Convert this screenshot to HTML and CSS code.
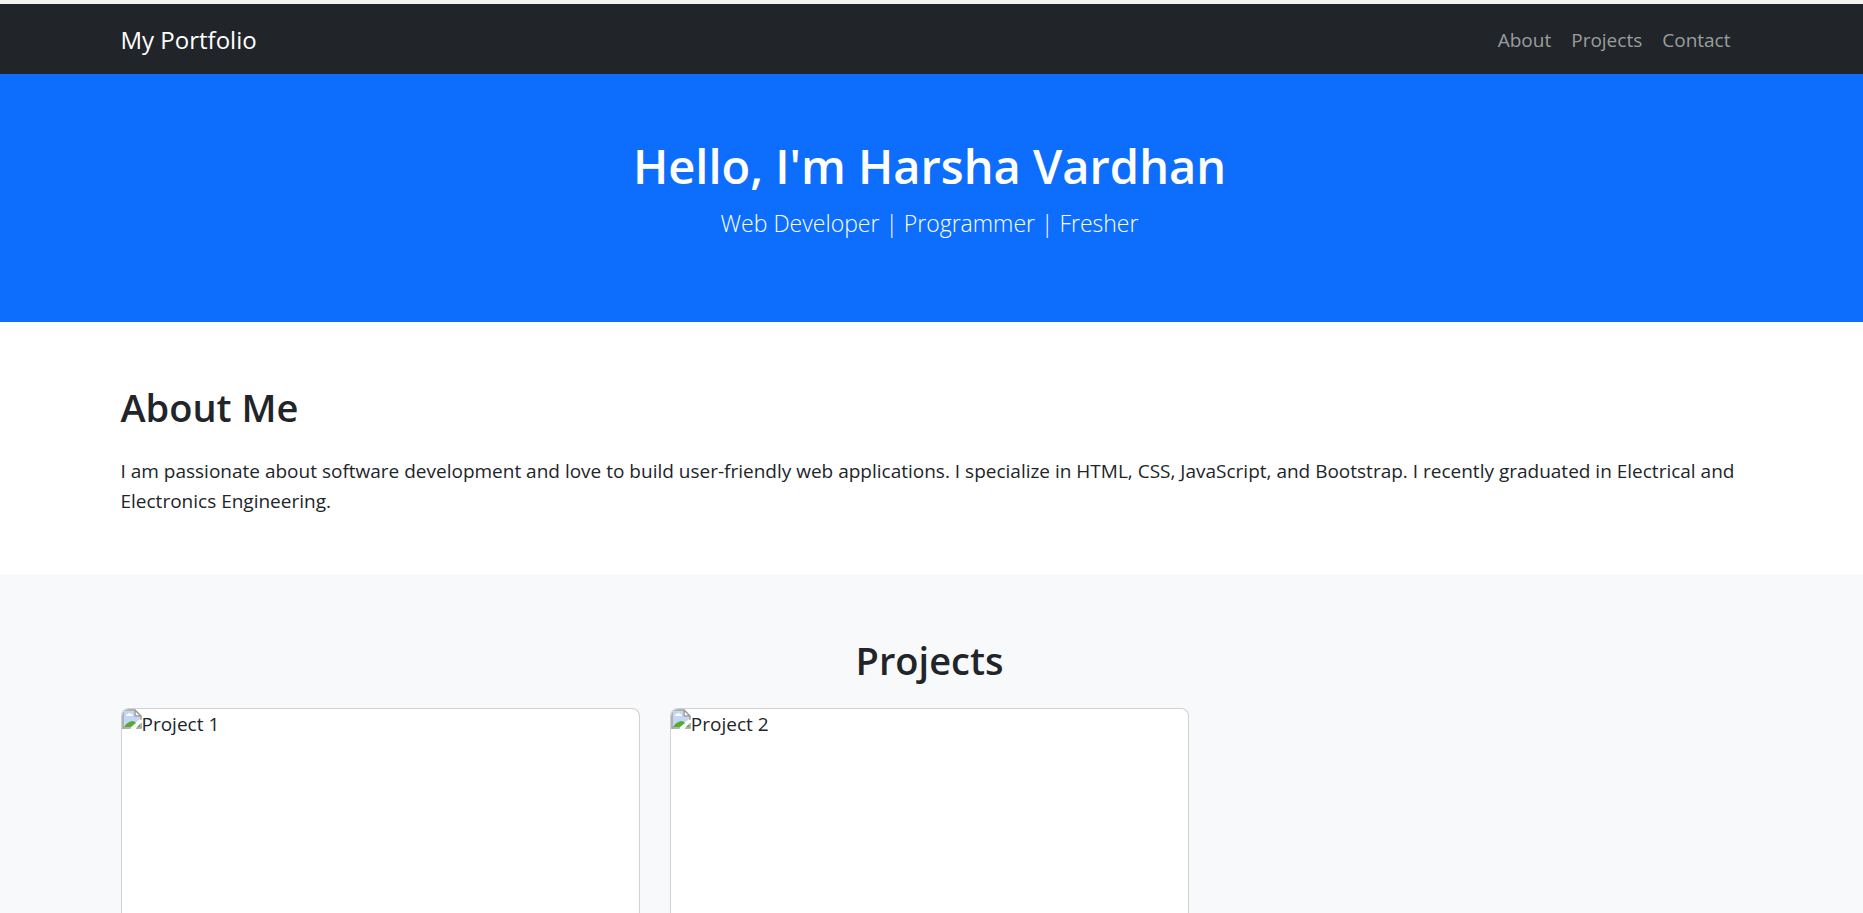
FILE: index.html
```html
<!DOCTYPE html>
<html lang="en">
<head>
<meta charset="utf-8">
<title>My Portfolio</title>
<link rel="stylesheet" href="styles.css">
</head>
<body>
<svg class="sprite" width="0" height="0" aria-hidden="true">
  <symbol id="missing" viewBox="0 0 20 20">
    <path d="M0 0h14l6 6v14H0z" fill="#fff"/>
    <path d="M2 2h10v6h6v2L9 18H2z" fill="#c5d6f5"/>
    <path d="M4 7q0-2 2-2 1-2 3 0 2 0 2 2z" fill="#fff"/>
    <path d="M2 18q3-5 8-6 3 0 4 2l-5 4z" fill="#55ac35"/>
    <path d="M14 18l4-4v4z" fill="#55ac35"/>
    <path d="M1 20V1h12l6 6v4M13 1v6h6M1 19h8M14 19h5v-5" fill="none" stroke="#999" stroke-width="1.5"/>
    <path d="M8 20L20 10v3l-7 7z" fill="#fff"/>
  </symbol>
</svg>
<header class="navbar">
  <nav class="container navbar-inner">
    <a class="brand" href="#">My Portfolio</a>
    <ul class="nav-list">
      <li><a class="nav-link" href="#about">About</a></li>
      <li><a class="nav-link" href="#projects">Projects</a></li>
      <li><a class="nav-link" href="#contact">Contact</a></li>
    </ul>
  </nav>
</header>
<section class="hero">
  <div class="container">
    <h1 class="hero-title">Hello, I'm Harsha Vardhan</h1>
    <p class="lead">Web Developer | Programmer | Fresher</p>
  </div>
</section>
<section class="section" id="about">
  <div class="container">
    <h2 class="section-title">About Me</h2>
    <p class="text">I am passionate about software development and love to build user-friendly web applications. I specialize in HTML, CSS, JavaScript, and Bootstrap. I recently graduated in Electrical and Electronics Engineering.</p>
  </div>
</section>
<section class="section projects" id="projects">
  <div class="container">
    <h2 class="section-title centered">Projects</h2>
    <div class="cards">
      <article class="card"><svg class="card-icon" aria-hidden="true"><use href="#missing"/></svg><span>Project 1</span></article>
      <article class="card"><svg class="card-icon" aria-hidden="true"><use href="#missing"/></svg><span>Project 2</span></article>
    </div>
  </div>
</section>
</body>
</html>
```
FILE: styles.css
```css
* { box-sizing: border-box; }
body {
  display: flex;
  flex-direction: column;
  height: 100vh;
  margin: 0;
  overflow: hidden;
  background: #fff;
  color: #212529;
  font-family: "Segoe UI", "Open Sans", "Noto Sans", sans-serif;
  font-size: 19px;
  line-height: 30px;
}
.sprite { position: absolute; }
.container {
  width: 100%;
  max-width: 1648px;
  margin: 0 auto;
  padding: 0 15px;
}
.navbar {
  flex: none;
  padding: 11px 4px 9px 0;
  border-top: 4px solid #f3f3f3;
  background: #212529;
}
.navbar-inner {
  display: flex;
  align-items: center;
  justify-content: space-between;
  height: 50px;
}
.brand {
  color: #fff;
  font-size: 24px;
  text-decoration: none;
}
.nav-list {
  display: flex;
  gap: 20px;
  margin: 0;
  padding: 0 8px 0 0;
  list-style: none;
}
.nav-link {
  color: #9b9d9e;
  text-decoration: none;
}
.hero {
  flex: none;
  padding: 62px 4px 80px 0;
  background: #0d6efd;
  color: #fff;
  text-align: center;
}
.hero-title {
  margin: 0 0 8px;
  font-size: 47px;
  font-weight: 600;
  line-height: 60px;
}
.lead {
  margin: 0;
  font-size: 23px;
  font-weight: 300;
  line-height: 38px;
}
.section {
  flex: none;
  padding: 61px 4px 59px 0;
}
.section-title {
  margin: 0 0 25px;
  font-size: 38px;
  font-weight: 600;
  line-height: 48px;
}
.centered {
  margin-bottom: 24px;
  text-align: center;
}
.text { margin: 0; }
.projects {
  display: flex;
  flex: 1 0 auto;
  padding-bottom: 0;
  background: #f8f9fa;
}
.projects .container {
  display: flex;
  flex-direction: column;
}
.cards {
  display: grid;
  flex: 1;
  grid-template-columns: repeat(3, 1fr);
  gap: 30px;
}
.card {
  display: flex;
  align-items: flex-start;
  overflow: hidden;
  border: 1px solid #d0d1d2;
  border-bottom: 0;
  border-radius: 8px 8px 0 0;
  background: #fff;
}
.card-icon {
  flex: none;
  width: 20px;
  height: 20px;
}
```
